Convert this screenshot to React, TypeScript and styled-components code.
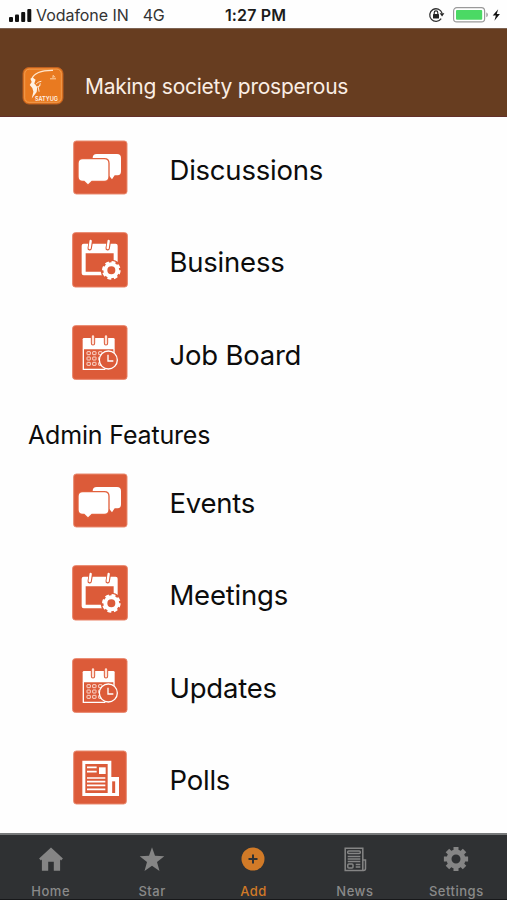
import React from "react";
import styled, { createGlobalStyle } from "styled-components";

const GlobalStyle = createGlobalStyle`
  * { box-sizing: border-box; }
  html, body { margin: 0; padding: 0; }
  body { background: #fff; font-family: Inter, "Liberation Sans", sans-serif; }
  svg { display: block; flex: none; }
`;

const Screen = styled.div`
  display: flex;
  flex-direction: column;
  width: 507px;
  height: 900px;
  overflow: hidden;
  background: #fefefe;
`;

const StatusBar = styled.div`
  display: grid;
  flex: none;
  grid-template-columns: 1fr auto 1fr;
  align-items: center;
  height: 28px;
  padding: 1px 6px 0 9px;
  color: #333;
  font-size: 16px;
`;

const StatusGroup = styled.div<{ $end?: boolean }>`
  display: flex;
  align-items: center;
  justify-content: ${(p) => (p.$end ? "flex-end" : "flex-start")};
  white-space: nowrap;
`;

const Carrier = styled.span`
  margin-left: 4px;
  letter-spacing: -0.05px;
`;

const Network = styled.span`
  margin-left: 14px;
  letter-spacing: -0.3px;
`;

const Clock = styled.span`
  margin-left: 1px;
  color: #1c1c1c;
  font-weight: 600;
  letter-spacing: 0.15px;
`;

const Header = styled.header`
  display: flex;
  flex: none;
  align-items: flex-start;
  height: 89px;
  padding: 38px 0 0 22px;
  background: #673d20;
  border-top: 1px solid #7d6353;
  border-bottom: 1px solid #63302a;
`;

const Tagline = styled.h1`
  margin: 7px 0 0 21px;
  color: #fbeee4;
  font-size: 21px;
  line-height: 26px;
  font-weight: 400;
  letter-spacing: -0.25px;
  white-space: nowrap;
`;

const Content = styled.main`
  flex: 1;
  min-height: 0;
  overflow: hidden;
  padding-top: 18px;
`;

const FeatureRow = styled.div`
  display: flex;
  height: 92.35px;
  padding-left: 65px;
`;

const FeatureName = styled.span`
  margin-left: 34.5px;
  color: #0c0c0c;
  font-size: 27.5px;
  line-height: 70.5px;
  letter-spacing: -0.22px;
`;

const SectionTitle = styled.h2`
  height: 56px;
  margin: 0;
  padding-left: 28px;
  color: #0c0c0c;
  font-size: 25px;
  line-height: 47px;
  font-weight: 400;
  letter-spacing: -0.17px;
`;

const TabBar = styled.nav`
  display: grid;
  flex: none;
  grid-template-columns: repeat(5, 1fr);
  height: 67px;
  padding-top: 12px;
  background: #2f3133;
  border-top: 2px solid #77797a;
  border-bottom: 1px solid #17181a;
`;

const Tab = styled.div<{ $active?: boolean }>`
  display: flex;
  flex-direction: column;
  align-items: center;
  color: ${(p) => (p.$active ? "#d17a27" : "#8a8a8a")};
`;

const TabLabel = styled.span`
  margin-top: 10px;
  font-size: 13px;
  line-height: 16px;
  font-weight: 500;
  letter-spacing: 0.5px;
`;

const SignalBars = () => (
  <svg width="23" height="14" viewBox="0 0 23 14" fill="#111">
    <rect x="0" y="9" width="4" height="5" rx="1" />
    <rect x="6" y="6.5" width="4" height="7.5" rx="1" />
    <rect x="12.2" y="4" width="4" height="10" rx="1" />
    <rect x="18.3" y="1" width="4" height="13" rx="1" />
  </svg>
);

const StatusIcons = () => (
  <svg width="73" height="20" viewBox="0 0 73 20">
    <path d="M13.2 13.7A6.3 6.3 0 1 1 14 8" fill="none" stroke="#333" strokeWidth="1.3" />
    <path d="M11.6 8.2h4.8l-2.3 3.4z" fill="#222" />
    <rect x="5" y="9" width="6" height="4.4" rx=".5" fill="#222" />
    <path d="M6.2 9V7.7a1.8 1.8 0 0 1 3.6 0V9" fill="none" stroke="#222" strokeWidth="1.1" />
    <rect x="25.6" y="2.7" width="31" height="14.2" rx="3.2" fill="#fff" stroke="#9a9a9a" strokeWidth="1.2" />
    <rect x="28" y="5" width="26.2" height="9.7" rx="1" fill="#4bd964" />
    <path d="M58.3 7.5c2.1.7 2.1 4 0 4.7z" fill="#9a9a9a" />
    <path d="M70.2 4.3l-5.5 6.2h3.2l-1.5 5.2 5.5-6.6h-3.2z" fill="#111" />
  </svg>
);

const Logo = () => (
  <svg width="42" height="38" viewBox="0 0 42 38">
    <rect x="1" y=".5" width="40" height="36.5" rx="6" fill="#e97a20" stroke="#bd6020" />
    <rect x="2.7" y="2.2" width="36.6" height="33.1" rx="4.5" fill="none" stroke="#f2a45c" strokeWidth=".8" />
    <path d="M31 3.4C19 3.2 12 6.4 9.8 11.8" fill="none" stroke="#ffe5cb" strokeWidth="1.2" />
    <path d="M8.4 11.8l2.2-1.3 3 2.2-1.3 3.8 2.9 3.6-.5 5-5 6.4 1.7-6.8-1.1-3.6-2.6-3.1 2-3z" fill="#fff1e2" />
    <path d="M14 17.3l2.2-2.2 3.2-.8M15.2 20l3-1.5M16 19l1.1 5.7M18.3 16.3l-.8 3" fill="none" stroke="#ffe9d4" strokeWidth="1" />
    <path d="M28 11.8h6M31 11V8.4l2.2 2" fill="none" stroke="#ffd9b2" strokeWidth=".9" />
    <text x="13" y="34" textLength="23" lengthAdjust="spacingAndGlyphs" fill="#fff3e8" fontFamily="Inter, sans-serif" fontSize="6" fontWeight="600">SATYUG</text>
  </svg>
);

/* Every feature drawing shares a 70×65 canvas with the tile inset in it. */
const Canvas = ({ children }: { children: React.ReactNode }) => (
  <svg width="70" height="65" viewBox="0 0 210 195">
    {children}
  </svg>
);

const ChatIcon = () => (
  <Canvas>
    <rect x="26" y="18" width="160" height="159" rx="8" fill="#dc5b39" stroke="#e98b71" strokeWidth="3" />
    <path d="M95 57h61q12 0 12 12v40q0 12-10 12h-9l-8 12-10-12H95q-12 0-12-12V69q0-12 12-12z" fill="#fff" />
    <path d="M53 73h65q12 0 12 12v40q0 12-12 12H80l-11 11-11-11h-5q-12 0-12-12V85q0-12 12-12z" fill="#fff" stroke="#e2613d" strokeWidth="8" />
    <path d="M53 73h65q12 0 12 12v40q0 12-12 12H80l-11 11-11-11h-5q-12 0-12-12V85q0-12 12-12z" fill="#fff" />
  </Canvas>
);

const CalendarGearIcon = () => (
  <Canvas>
    <rect x="23" y="17" width="164" height="163" rx="8" fill="#dc5b39" stroke="#e98065" strokeWidth="3" />
    <path d="M56 50h96q6 0 6 6v89H56q-6 0-6-6V56q0-6 6-6zM62 79v55h84V79z" fill="#fff" fillRule="evenodd" />
    <path d="M78 40l-4 24M132 40l-4 24" stroke="#dc5b39" strokeWidth="13" strokeLinecap="round" />
    <path d="M77 42l-3 21M131 42l-3 21" stroke="#fff" strokeWidth="7" strokeLinecap="round" />
    <circle cx="139" cy="130" r="32" fill="#dc5b39" />
    <circle cx="139" cy="130" r="18" fill="none" stroke="#fff" strokeWidth="12" />
    <circle cx="139" cy="130" r="25" fill="none" stroke="#fff" strokeWidth="6" strokeDasharray="11.6 8.035" />
  </Canvas>
);

const CalendarClockIcon = () => (
  <Canvas>
    <rect x="23" y="17" width="163" height="161" rx="8" fill="#dc5b39" stroke="#e98065" strokeWidth="3" />
    <path d="M53 58q0-4 4-4h88q4 0 4 4v30H53z" fill="#fff" />
    <path d="M55 87v61h66M147 87v13" fill="none" stroke="#fff" strokeWidth="4" />
    <path d="M84 49v21M123 49v21" stroke="#dc5b39" strokeWidth="13" strokeLinecap="round" />
    <path d="M84 49v21M123 49v21" stroke="#ffe1d6" strokeWidth="7" strokeLinecap="round" />
    <g fill="none" stroke="#fbd6ca" strokeWidth="3">
      {[95, 111, 127].map((y) =>
        [66, 83, 101].map((x) => <rect key={`${x}-${y}`} x={x} y={y} width="10" height="9" rx="1" />)
      )}
    </g>
    <circle cx="130" cy="120" r="27" fill="#dc5b39" stroke="#fff" strokeWidth="4" />
    <path d="M129 104v19h16" fill="none" stroke="#fff" strokeWidth="4" />
  </Canvas>
);

const NewspaperIcon = () => (
  <Canvas>
    <rect x="26" y="18" width="158" height="159" rx="8" fill="#dc5b39" stroke="#e98b71" strokeWidth="3" />
    <path d="M52 47h87v49h23v57H52z" fill="#fff" />
    <rect x="61" y="57" width="67" height="87" fill="#dc5b39" />
    <path d="M66 67h29M66 80h29M66 99h55M66 110h55M66 121h55M66 133h55" stroke="#fff" strokeWidth="5" />
    <rect x="102" y="67" width="20" height="20" fill="#fff" />
    <path d="M146 109v35" stroke="#dc5b39" strokeWidth="9" />
  </Canvas>
);

const HomeIcon = () => (
  <svg width="28" height="26" viewBox="0 0 28 26" fill="#858585">
    <path d="M14 .5l11.9 11.1-1.8 1.9-1-.9V23.8h-6.3v-9h-5.6v9H4.9V12.6l-1 .9-1.8-1.9z" />
  </svg>
);

const StarIcon = () => (
  <svg width="28" height="26" viewBox="0 0 28 26" fill="#858585">
    <path d="M14 .3l3 8.5 9.3.4-7.3 5.8 2.5 9L14 18.8 6.5 24l2.5-9-7.3-5.8 9.3-.4z" />
  </svg>
);

const AddIcon = () => (
  <svg width="28" height="26" viewBox="0 0 28 26">
    <circle cx="14" cy="12" r="11.5" fill="#d17a27" />
    <path d="M9.5 12h9M14 7.5v9" stroke="#2f3133" strokeWidth="2" />
  </svg>
);

const NewsIcon = () => (
  <svg width="28" height="26" viewBox="0 0 28 26" fill="none" stroke="#858585" strokeWidth="1.5">
    <path d="M4.2 1.2h17.6v22.3H4.2zM21.8 13h2.7v8.5q0 2-2 2h-1" />
    <rect x="6.7" y="4.1" width="12.6" height="2.5" rx="1" />
    <path d="M6.7 9.5h12.6M6.7 12h12.6M6.7 14.5h12.6M14.7 17.5h4.6M14.7 20.1h4.6" />
    <rect x="6.8" y="16.9" width="5.2" height="4" rx="1" />
  </svg>
);

const SettingsIcon = () => (
  <svg width="28" height="26" viewBox="0 0 28 26" fill="none" stroke="#858585">
    <circle cx="14" cy="12" r="7" strokeWidth="5" />
    <g strokeWidth="5">
      {[0, 45, 90, 135].map((a) => (
        <path key={a} d="M14 -.1v4.3M14 19.8v4.3" transform={`rotate(${a} 14 12)`} />
      ))}
    </g>
  </svg>
);

const features = [
  { name: "Discussions", Icon: ChatIcon },
  { name: "Business", Icon: CalendarGearIcon },
  { name: "Job Board", Icon: CalendarClockIcon },
];

const adminFeatures = [
  { name: "Events", Icon: ChatIcon },
  { name: "Meetings", Icon: CalendarGearIcon },
  { name: "Updates", Icon: CalendarClockIcon },
  { name: "Polls", Icon: NewspaperIcon },
];

const tabs = [
  { name: "Home", Icon: HomeIcon },
  { name: "Star", Icon: StarIcon },
  { name: "Add", Icon: AddIcon, active: true },
  { name: "News", Icon: NewsIcon },
  { name: "Settings", Icon: SettingsIcon },
];

const FeatureList = ({ items }: { items: typeof features }) => (
  <div>
    {items.map(({ name, Icon }) => (
      <FeatureRow key={name}>
        <Icon />
        <FeatureName>{name}</FeatureName>
      </FeatureRow>
    ))}
  </div>
);

export default function App() {
  return (
    <Screen>
      <GlobalStyle />
      <StatusBar>
        <StatusGroup>
          <SignalBars />
          <Carrier>Vodafone IN</Carrier>
          <Network>4G</Network>
        </StatusGroup>
        <Clock>1:27 PM</Clock>
        <StatusGroup $end>
          <StatusIcons />
        </StatusGroup>
      </StatusBar>
      <Header>
        <Logo />
        <Tagline>Making society prosperous</Tagline>
      </Header>
      <Content>
        <FeatureList items={features} />
        <SectionTitle>Admin Features</SectionTitle>
        <FeatureList items={adminFeatures} />
      </Content>
      <TabBar>
        {tabs.map(({ name, Icon, active }) => (
          <Tab key={name} $active={active}>
            <Icon />
            <TabLabel>{name}</TabLabel>
          </Tab>
        ))}
      </TabBar>
    </Screen>
  );
}
